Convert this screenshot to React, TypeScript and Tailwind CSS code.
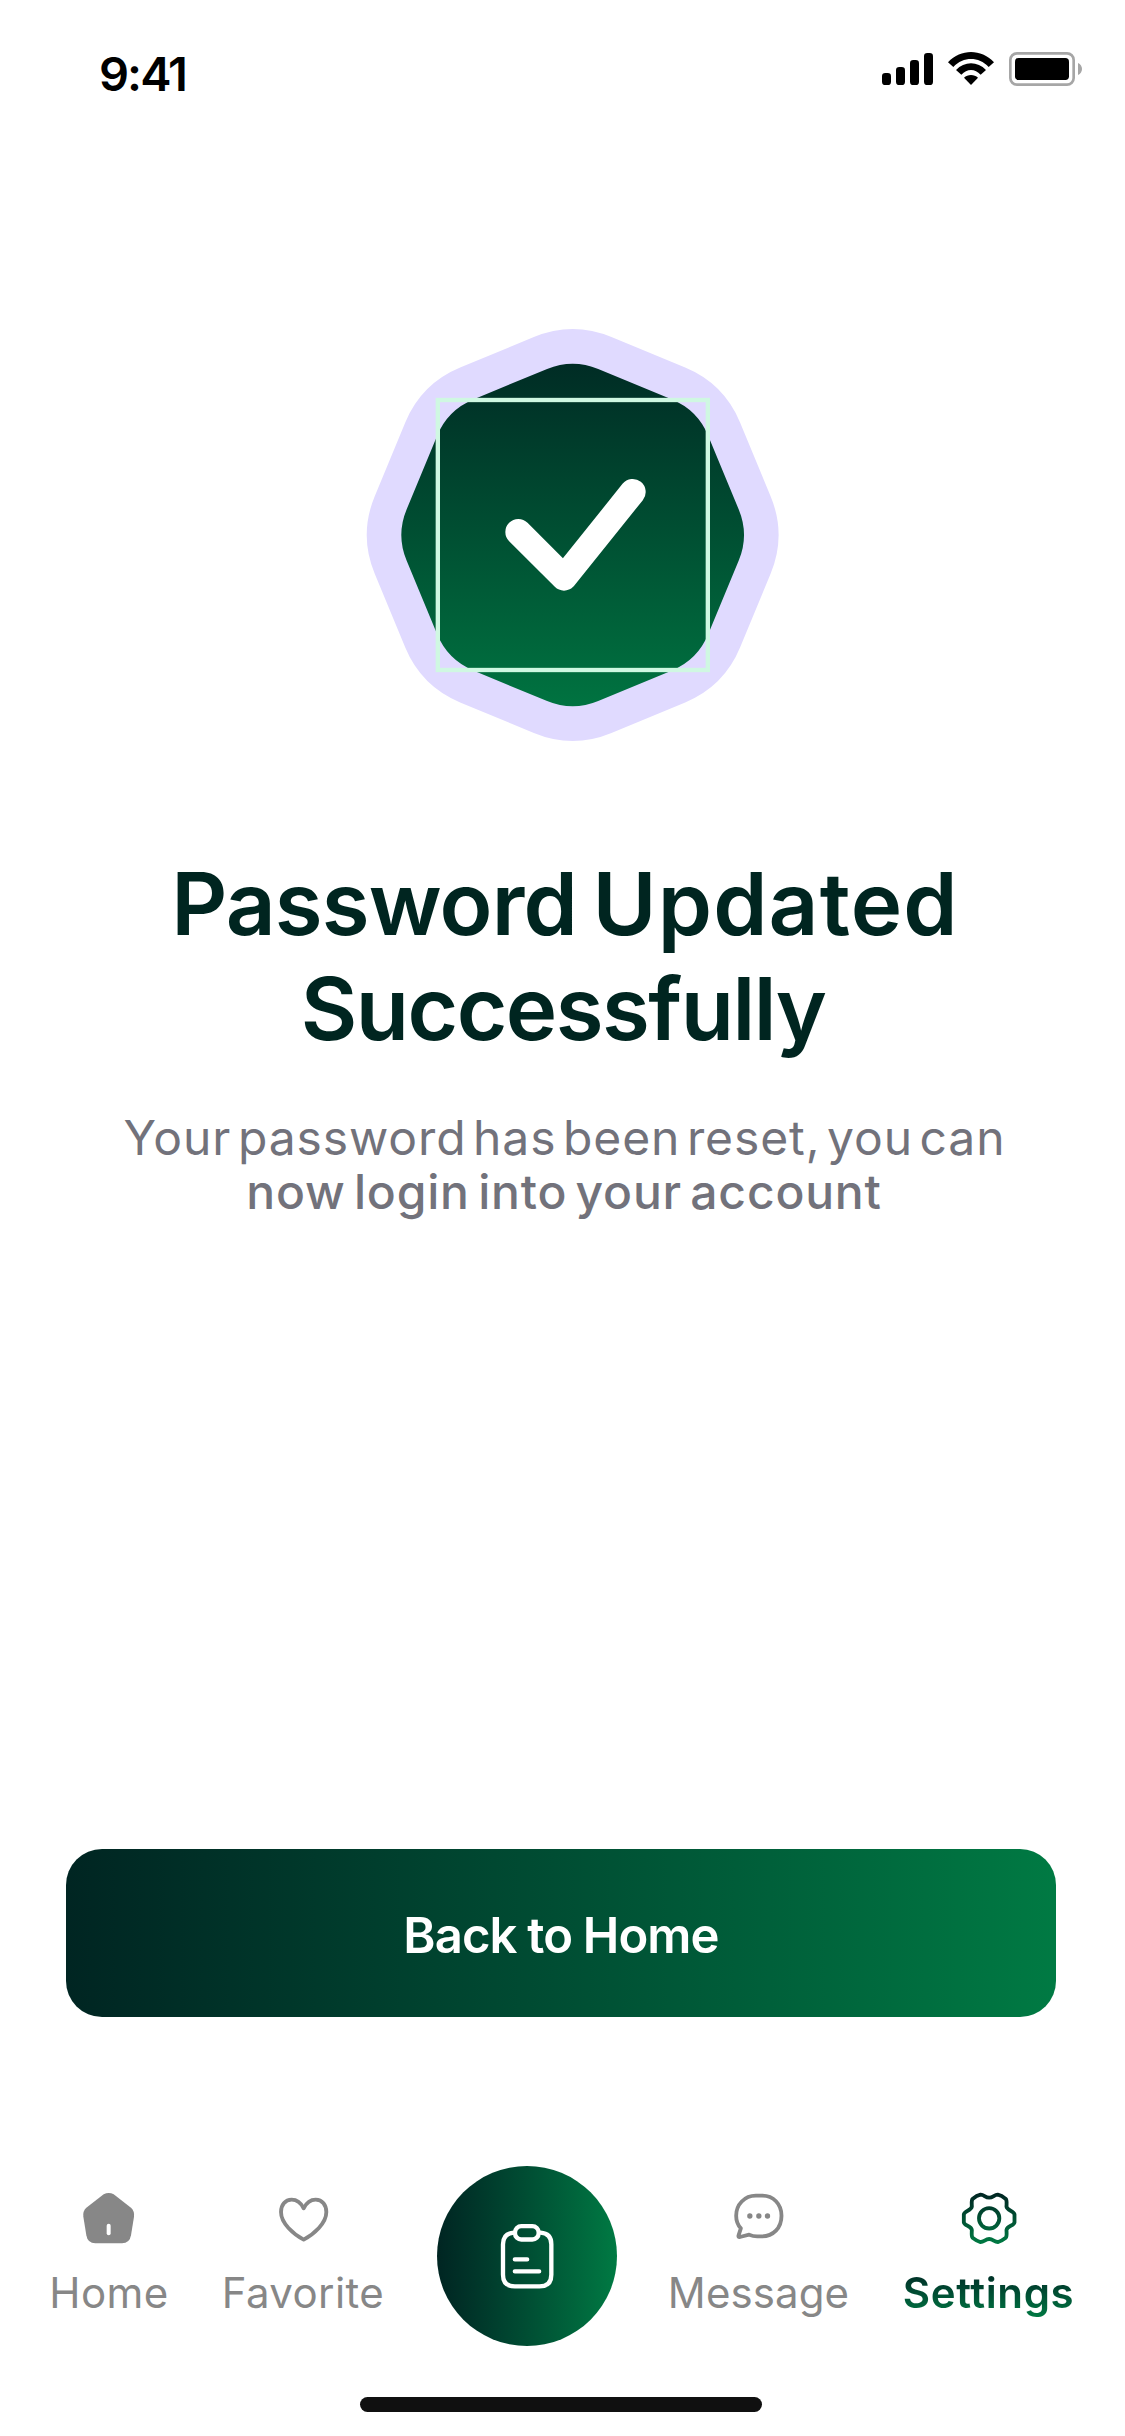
import type { ReactNode } from 'react';

/** Octagon with vertices at multiples of 45°, whose corners are rounded off. */
function roundedOctagon(radius: number, cut: number) {
  const vertices = Array.from({ length: 8 }, (_, i) => {
    const a = (i * Math.PI) / 4;
    return [radius * Math.sin(a), -radius * Math.cos(a)];
  });
  const towards = (a: number[], b: number[]) => {
    const d = Math.hypot(b[0] - a[0], b[1] - a[1]);
    return `${(a[0] + ((b[0] - a[0]) * cut) / d).toFixed(2)} ${(a[1] + ((b[1] - a[1]) * cut) / d).toFixed(2)}`;
  };
  return (
    vertices
      .map((v, i) => {
        const prev = vertices[(i + 7) % 8];
        const next = vertices[(i + 1) % 8];
        return `${i === 0 ? 'M' : 'L'}${towards(v, prev)} Q${v[0].toFixed(2)} ${v[1].toFixed(2)} ${towards(v, next)}`;
      })
      .join(' ') + 'Z'
  );
}

function StatusBar() {
  return (
    <header className="flex h-[134px] shrink-0 justify-between pl-[99px] pr-[25px] pt-[46px]">
      <span className="text-[47px] font-semibold leading-[56px] tracking-[-1.95px] text-black">9:41</span>
      <svg className="h-[80px] w-[240px] -mt-[16px]" viewBox="0 0 720 240">
        <g>
          <rect x="66" y="129" width="27" height="36" rx="10" />
          <rect x="108" y="111" width="27" height="54" rx="10" />
          <rect x="150" y="90" width="27" height="75" rx="10" />
          <rect x="192" y="69" width="27" height="96" rx="10" />
        </g>
        <path d="M264 97 C303 56 363 56 402 97 L386 111 C356 79 310 79 280 111 Z" />
        <path d="M288 120 C313 93 353 93 378 120 L362 134 C345 115 321 115 304 134 Z" />
        <path d="M312 143 C323 132 343 132 354 143 L333 165 Z" />
        <rect x="451" y="70" width="190" height="94" rx="20" fill="none" stroke="#a6a6a6" strokeWidth="8" />
        <rect x="465" y="84" width="162" height="66" rx="11" />
        <path d="M654 99 C670 106 670 128 654 135Z" fill="#a6a6a6" />
      </svg>
    </header>
  );
}

function SuccessBadge() {
  return (
    <svg className="ml-[348px] mt-[176px] h-[450px] w-[450px] shrink-0" viewBox="-674 -675 1350 1350">
      <defs>
        <linearGradient id="badge" gradientUnits="userSpaceOnUse" x1="0" y1="-617" x2="0" y2="617">
          <stop offset="0" stopColor="#002522" />
          <stop offset="1" stopColor="#007a43" />
        </linearGradient>
      </defs>
      <path d={roundedOctagon(642, 126)} fill="#e0daff" />
      <path d={roundedOctagon(530, 83)} fill="url(#badge)" />
      <rect x="-404.5" y="-405" width="810" height="810" fill="none" stroke="#cff8e2" strokeWidth="13" />
      <path
        d="M-163 -9 L-26 128 L180 -129"
        fill="none"
        stroke="#fff"
        strokeWidth="78"
        strokeLinecap="round"
        strokeLinejoin="round"
      />
    </svg>
  );
}

function NavItem({ viewBox, label, children }: { viewBox: string; label: ReactNode; children: ReactNode }) {
  return (
    <div className="flex flex-col items-center gap-[19px] pt-[23px] text-[#878787]">
      <svg className="h-[60px] w-[60px]" viewBox={viewBox} fill="none" stroke="currentColor" strokeWidth="11.5" strokeLinecap="round" strokeLinejoin="round">
        {children}
      </svg>
      {label}
    </div>
  );
}

function BottomNav() {
  return (
    <nav className="grid shrink-0 grid-cols-[218px_170px_277px_187px_273px]">
      <NavItem viewBox="147 87 180 180" label={<span className="text-[42px] leading-[50px] tracking-[0.47px]">Home</span>}>
        <path
          d="M221 103 Q236 95 251 103 L303 143 Q314 153 312 170 L303 226 Q299 250 276 250 L196 250 Q173 250 169 226 L160 170 Q158 153 169 143 Z"
          fill="currentColor"
          stroke="none"
        />
        <rect x="230" y="191" width="12" height="35" rx="6" fill="#fff" stroke="none" />
      </NavItem>
      <NavItem viewBox="729 87 180 180" label={<span className="text-[42px] leading-[50px] tracking-[0.43px]">Favorite</span>}>
        <path d="M821 145 C812 127 800 119 785 119 C765 119 753 136 753 156 C753 190 790 222 821 239 C852 222 889 190 889 156 C889 136 877 119 857 119 C842 119 830 127 821 145Z" />
      </NavItem>
      <div className="flex h-[180px] w-[180px] items-center justify-center justify-self-center rounded-full bg-linear-to-r from-[#002522] to-[#007a43]">
        <svg
          className="h-[80px] w-[80px]"
          viewBox="199.5 197 240 240"
          fill="none"
          stroke="#fff"
          strokeWidth="13"
          strokeLinecap="round"
          strokeLinejoin="round"
        >
          <path d="M283 247 H280 Q247.500 249 247.500 282 V373 Q247.500 408 283 408 H357 Q392.500 408 392.500 373 V282 Q392.500 249 360 247 H356" />
          <rect x="283.500" y="227.500" width="71" height="40" rx="19" />
          <path d="M283 327 H320 M283 363 H356" />
        </svg>
      </div>
      <NavItem viewBox="265.5 87 180 180" label={<span className="text-[42px] leading-[50px] tracking-[0.1px]">Message</span>}>
        <path d="M346 107 H366 C398 107 423 132 423 167 C423 204 398 229 364 229 H350 C340 229 333 227 326 224 L298 231 Q293 232 294 227 L301 205 C292 195 287 182 287 167 C287 134 312 107 346 107Z" />
        <g fill="currentColor" stroke="none">
          <circle cx="328" cy="168" r="8" />
          <circle cx="355" cy="168" r="8" />
          <circle cx="381" cy="168" r="8" />
        </g>
      </NavItem>
      <NavItem
        viewBox="957.5 87 180 180"
        label={
          <span className="bg-linear-to-b from-[#002522] to-[#007a43] bg-clip-text text-[42px] font-semibold leading-[50px] tracking-[0.61px] text-transparent">
            Settings
          </span>
        }
      >
        <defs>
          <linearGradient id="gear" gradientUnits="userSpaceOnUse" x1="0" y1="99" x2="0" y2="251">
            <stop offset="0" stopColor="#002522" />
            <stop offset="1" stopColor="#007a43" />
          </linearGradient>
        </defs>
        <g stroke="url(#gear)">
          <path d="M1048 113 C1060 113 1064 103 1074 104 C1084 106 1092 112 1098 117 C1102 122 1100 132 1100 140 C1102 152 1122 152 1124 163 L1124 187 C1122 198 1102 197 1100 210 C1100 218 1102 228 1098 233 C1090 239 1084 243 1075 246 C1064 247 1060 237 1048 237 C1036 237 1032 247 1021 246 C1012 243 1006 239 998 233 C994 228 996 218 996 210 C994 197 974 198 972 187 L972 163 C974 152 994 152 996 140 C996 132 994 122 998 117 C1004 112 1012 106 1022 104 C1032 103 1036 113 1048 113Z" />
          <circle cx="1048" cy="175" r="30.500" />
        </g>
      </NavItem>
    </nav>
  );
}

export default function App() {
  return (
    <div className="flex h-[2436px] w-[1125px] flex-col overflow-hidden bg-white font-['Inter',sans-serif]">
      <StatusBar />
      <SuccessBadge />
      <h1 className="mt-[91px] shrink-0 whitespace-nowrap text-center text-[87px] font-semibold leading-[105px] text-[#002520]">
        <span className="block pl-[5px] [word-spacing:-6.3px]">
          <span className="tracking-[-0.85px]">Password</span> <span className="tracking-[1.15px]">Updated</span>
        </span>
        <span className="block pl-[1px] tracking-[-1.51px]">Successfully</span>
      </h1>
      <p className="mt-[50px] shrink-0 whitespace-nowrap text-center text-[48px] leading-[54px] text-[#72727b]">
        <span className="block pl-[4px] tracking-[0.9px] [word-spacing:-7.8px]">Your password has been reset, you can</span>
        <span className="block pl-[3px] font-medium tracking-[0.8px] [word-spacing:-5.2px]">now login into your account</span>
      </p>
      <button className="ml-[66px] mt-[629.5px] h-[168px] w-[990px] shrink-0 rounded-[36px] bg-linear-to-r from-[#002522] to-[#007a43] pt-[7px] text-[49px] font-semibold tracking-[-0.9px] text-white [word-spacing:-0.8px]">
        Back to Home
      </button>
      <div className="mt-[149.5px]">
        <BottomNav />
      </div>
      <div className="ml-[360px] mt-[51px] h-[15px] w-[402px] shrink-0 rounded-full bg-[#101010]" />
    </div>
  );
}
